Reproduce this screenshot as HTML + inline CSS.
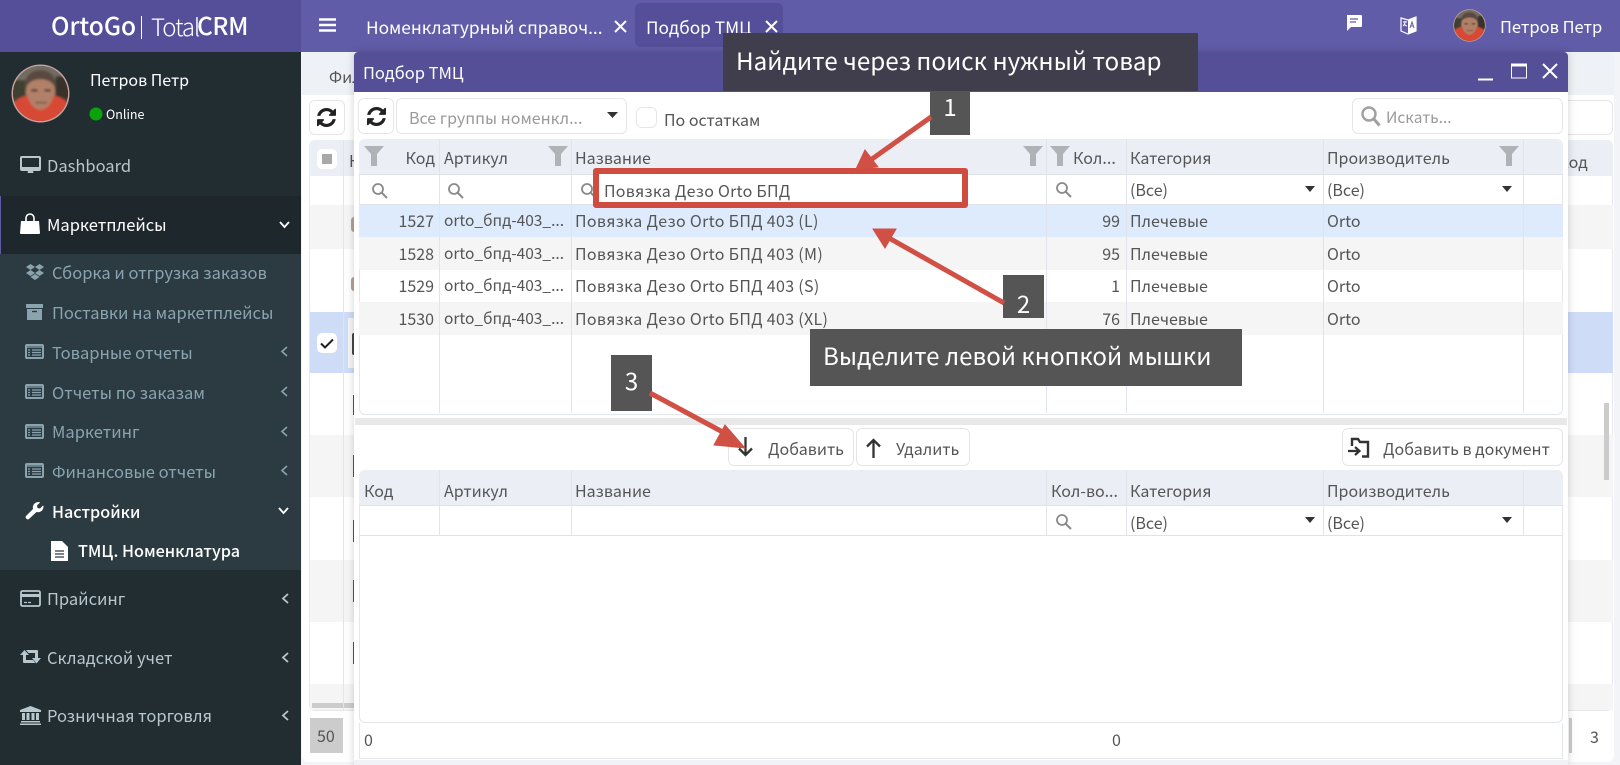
<!DOCTYPE html>
<html lang="ru"><head><meta charset="utf-8"><title>Подбор ТМЦ</title>
<style>
*{box-sizing:border-box}
html,body{margin:0;padding:0}
body{width:1620px;height:765px;overflow:hidden;position:relative;background:#ecf0f5;font-family:"Noto Sans CJK SC","Liberation Sans",sans-serif;color:#444}
.a{position:absolute}
.t{position:absolute;white-space:nowrap;line-height:20px;height:20px;font-size:16px}
.n{color:#8aa4af;font-size:16.5px}
.m{color:#b8c7ce;font-size:16.5px}
.w{color:#fff}
.g{color:#555;font-size:16px}
.o{font-size:15.5px}
.p{letter-spacing:.32px}
.r{text-align:right}
.v{position:absolute;width:1px;background:#e1e5ea}
.h{position:absolute;height:1px;background:#dfe3e8}
.b{position:absolute;background:#fff;border:1px solid #e6e6e6;border-radius:6px}
svg{position:absolute;overflow:visible}
</style></head><body>

<svg width="0" height="0" style="left:0;top:0">
<defs>
<filter id="bl" x="-10%" y="-10%" width="120%" height="120%"><feGaussianBlur stdDeviation="1"/></filter>
<clipPath id="cc"><circle cx="29" cy="29" r="27"/></clipPath>
<symbol id="av" viewBox="0 0 58 58">
<circle cx="29" cy="29" r="28.500" fill="#c9a09c"/>
<circle cx="29" cy="29" r="27" fill="#45433c"/>
<g clip-path="url(#cc)"><g filter="url(#bl)">
<rect x="0" y="0" width="58" height="16" fill="#6f6d64"/>
<rect x="0" y="16" width="14" height="18" fill="#3f3f30"/>
<rect x="44" y="12" width="14" height="22" fill="#38332c"/>
<ellipse cx="29" cy="28" rx="14.500" ry="18" fill="#b08068"/>
<path d="M14 25C12 12 20 6 29 6s17 6 15 19c-2-7-8-10-15-10s-13 3-15 10z" fill="#5a4a40"/>
<path d="M20 26h6M33 26h6" stroke="#4a3228" stroke-width="2"/>
<path d="M24 38h11" stroke="#7d4f3f" stroke-width="1.500"/>
<path d="M0 58V40c6-6 11-8 16-9 2 8 7 14 13 14s11-6 13-14c6 1 11 4 16 9v18z" fill="#d84a35"/>
</g></g>
</symbol>
<symbol id="ref" viewBox="0 0 1536 1536"><path d="M1511 928q0 5-1 7-64 268-268 434.500t-478 166.500q-146 0-282.500-55t-243.500-157l-129 129q-19 19-45 19t-45-19-19-45v-448q0-26 19-45t45-19h448q26 0 45 19t19 45-19 45l-137 137q71 66 161 102t187 36q134 0 250-65t186-179q11-17 53-117 8-23 30-23h192q13 0 22.500 9.500t9.500 22.500zm25-800v448q0 26-19 45t-45 19h-448q-26 0-45-19t-19-45 19-45l138-138q-148-137-349-137-134 0-250 65t-186 179q-11 17-53 117-8 23-30 23h-199q-13 0-22.500-9.500t-9.500-22.500v-7q65-268 270-434.500t480-166.500q146 0 284 55.500t245 156.500l130-129q19-19 45-19t45 19 19 45z" fill="#222"/></symbol>
</defs></svg>

<!-- top bar -->
<div class="a" style="left:0;top:0;width:1620px;height:52px;background:#605ca8"></div>
<div class="a" style="left:0;top:0;width:301px;height:52px;background:#554f99"></div>
<div class="t w" style="left:51px;top:14px;height:24px;line-height:24px;font-size:24.500px;font-weight:500">OrtoGo</div>
<div class="a" style="left:141px;top:16px;width:1px;height:23px;background:#fff"></div>
<div class="t w" style="left:151px;top:14px;height:24px;line-height:24px;font-size:24px;font-weight:300;letter-spacing:-1.100px">Total</div>
<div class="t w" style="left:197px;top:14px;height:24px;line-height:24px;font-size:24.500px;font-weight:500;letter-spacing:-.4px">CRM</div>
<svg style="left:319px;top:18px" width="18" height="14"><path d="M0 1.500h17M0 7h17M0 12.500h17" stroke="#fff" stroke-width="2.600"/></svg>
<div class="t w" style="left:366px;top:17px;font-size:17.300px">Номенклатурный справоч...</div>
<svg style="left:614px;top:20px" width="13" height="13"><path d="M1 1l11 11M12 1L1 12" stroke="#fff" stroke-width="2"/></svg>
<div class="a" style="left:635px;top:3px;width:148px;height:44px;background:#554f99;border-radius:6px"></div>
<div class="t w" style="left:646px;top:17px;font-size:17.300px">Подбор ТМЦ</div>
<svg style="left:765px;top:20px" width="13" height="13"><path d="M1 1l11 11M12 1L1 12" stroke="#fff" stroke-width="2"/></svg>
<svg style="left:1346px;top:15px" width="16" height="16"><path d="M1 0h14a1 1 0 011 1v10a1 1 0 01-1 1H5l-4 4z" fill="#fff"/><path d="M4 4h8M4 7h6" stroke="#605ca8" stroke-width="1.200"/></svg>
<svg style="left:1400px;top:15px" width="17" height="20"><path d="M1 3l7 2 8-3v14l-8 3-7-3z" fill="none" stroke="#fff" stroke-width="1.200"/><path d="M8 5v14l8-3V2z" fill="#fff"/><path d="M10 13l2-6 2 6M11 11h2" stroke="#605ca8" stroke-width="1" fill="none"/><path d="M3 7h4M5 6v1c0 2-1 3-2 4M4 9c1 1 2 2 3 2" stroke="#fff" stroke-width="1" fill="none"/></svg>
<svg style="left:1453px;top:9px" width="33" height="33"><use href="#av"/></svg>
<div class="t w" style="left:1500px;top:16px;font-size:16.500px">Петров Петр</div>

<!-- sidebar -->
<div class="a" style="left:0;top:52px;width:301px;height:713px;background:#222d32"></div>
<div class="a" style="left:0;top:196px;width:301px;height:58px;background:#1e282c;border-left:1px solid #605ca8"></div>
<div class="a" style="left:0;top:254px;width:301px;height:316px;background:#2c3b41"></div>
<svg style="left:11px;top:64px" width="59" height="59"><use href="#av"/></svg>
<div class="t w" style="left:90px;top:69px;font-size:16px">Петров Петр</div>
<svg style="left:89px;top:107px" width="14" height="14"><circle cx="7" cy="7" r="6.500" fill="#0ba30b"/></svg>
<div class="t w" style="left:106px;top:104px;font-size:12.500px">Online</div>

<svg style="left:20px;top:156px" width="21" height="18"><path d="M2 0h17a2 2 0 012 2v11a2 2 0 01-2 2h-6l.5 2h-6l.5-2H2a2 2 0 01-2-2V2a2 2 0 012-2zm0 2v9h17V2z" fill="#b8c7ce"/></svg>
<div class="t m" style="left:47px;top:155px">Dashboard</div>
<svg style="left:20px;top:214px" width="20" height="20"><path d="M1 7h18l1 12a1 1 0 01-1 1H1a1 1 0 01-1-1z" fill="#fff"/><path d="M6 9V4a4 4 0 018 0v5" fill="none" stroke="#fff" stroke-width="1.600"/></svg>
<div class="t w" style="left:47px;top:214px;font-size:16.500px">Маркетплейсы</div>
<svg style="left:279px;top:221px" width="11" height="8"><path d="M1 1l4.500 5L10 1" fill="none" stroke="#fff" stroke-width="1.800"/></svg>

<svg style="left:26px;top:264px" width="18" height="16"><path d="M4.500 0L9 3 4.500 6 0 3zM13.500 0L18 3l-4.500 3L9 3zM4.500 6L9 9 4.500 12 0 9zM13.500 6L18 9l-4.500 3L9 9zM4.500 13L9 10l4.500 3L9 16z" fill="#8aa4af"/></svg>
<div class="t n" style="left:52px;top:262px">Сборка и отгрузка заказов</div>
<svg style="left:26px;top:304px" width="17" height="16"><path d="M0 0h17v4H0zM1 5h15v11H1z" fill="#8aa4af"/><path d="M6 7.500h5" stroke="#2c3b41" stroke-width="1.400"/></svg>
<div class="t n" style="left:52px;top:302px">Поставки на маркетплейсы</div>
<svg style="left:25px;top:344px" width="19" height="15"><rect x="1" y="1" width="17" height="13" rx="1" fill="none" stroke="#8aa4af" stroke-width="2"/><path d="M1 3h17M3 6h2M7 6h9M3 8.500h2M7 8.500h9M3 11h2M7 11h9" stroke="#8aa4af" stroke-width="1.300"/></svg>
<div class="t n" style="left:52px;top:342px">Товарные отчеты</div>
<svg style="left:25px;top:384px" width="19" height="15"><rect x="1" y="1" width="17" height="13" rx="1" fill="none" stroke="#8aa4af" stroke-width="2"/><path d="M1 3h17M3 6h2M7 6h9M3 8.500h2M7 8.500h9M3 11h2M7 11h9" stroke="#8aa4af" stroke-width="1.300"/></svg>
<div class="t n" style="left:52px;top:382px">Отчеты по заказам</div>
<svg style="left:25px;top:424px" width="19" height="15"><rect x="1" y="1" width="17" height="13" rx="1" fill="none" stroke="#8aa4af" stroke-width="2"/><path d="M1 3h17M3 6h2M7 6h9M3 8.500h2M7 8.500h9M3 11h2M7 11h9" stroke="#8aa4af" stroke-width="1.300"/></svg>
<div class="t n" style="left:52px;top:421px">Маркетинг</div>
<svg style="left:25px;top:463px" width="19" height="15"><rect x="1" y="1" width="17" height="13" rx="1" fill="none" stroke="#8aa4af" stroke-width="2"/><path d="M1 3h17M3 6h2M7 6h9M3 8.500h2M7 8.500h9M3 11h2M7 11h9" stroke="#8aa4af" stroke-width="1.300"/></svg>
<div class="t n" style="left:52px;top:461px">Финансовые отчеты</div>
<svg style="left:281px;top:346px" width="7" height="11"><path d="M6 1L1 5.500 6 10" fill="none" stroke="#8aa4af" stroke-width="1.600"/></svg>
<svg style="left:281px;top:386px" width="7" height="11"><path d="M6 1L1 5.500 6 10" fill="none" stroke="#8aa4af" stroke-width="1.600"/></svg>
<svg style="left:281px;top:426px" width="7" height="11"><path d="M6 1L1 5.500 6 10" fill="none" stroke="#8aa4af" stroke-width="1.600"/></svg>
<svg style="left:281px;top:465px" width="7" height="11"><path d="M6 1L1 5.500 6 10" fill="none" stroke="#8aa4af" stroke-width="1.600"/></svg>
<svg style="left:25px;top:502px" width="18" height="18"><path d="M1 14L8 7C7 3 10 0 14 0c1 0 1 .5 .5 1L12 3.500l.5 2.500 2.500.5L17.500 4c.5-.5 1-.5 1 .5 0 4-3.500 6.500-7 5.500L4 17c-1.500 1.500-4.500-1.500-3-3z" fill="#fff"/></svg>
<div class="t w" style="left:52px;top:501px;font-size:16.200px;font-weight:500">Настройки</div>
<svg style="left:278px;top:507px" width="11" height="8"><path d="M1 1l4.500 5L10 1" fill="none" stroke="#fff" stroke-width="1.800"/></svg>
<svg style="left:51px;top:541px" width="17" height="20"><path d="M0 0h11l6 6v14H0z" fill="#fff"/><path d="M4 10h9M4 13h9M4 16h9" stroke="#2c3b41" stroke-width="1.200"/></svg>
<div class="t w" style="left:78px;top:540px;font-size:16.200px;font-weight:500">ТМЦ. Номенклатура</div>

<svg style="left:20px;top:590px" width="21" height="17"><rect x="1" y="1" width="19" height="15" rx="1.500" fill="none" stroke="#b8c7ce" stroke-width="1.800"/><path d="M1 5.500h19" stroke="#b8c7ce" stroke-width="3"/><path d="M4 12.500h3M8 12.500h3" stroke="#b8c7ce" stroke-width="1.200"/></svg>
<div class="t m" style="left:47px;top:588px">Прайсинг</div>
<svg style="left:20px;top:650px" width="21" height="15"><path d="M4.500 0L9 5H6v5h7l2.500 3H4a1 1 0 01-1-1V5H0zM6 0h11a1 1 0 011 1v7h3l-4.500 5.500L12 8h3V3H8.500z" fill="#b8c7ce"/></svg>
<div class="t m" style="left:47px;top:647px">Складской учет</div>
<svg style="left:20px;top:706px" width="21" height="19"><path d="M10.500 0L21 4v2H0V4zM2 7h3v7H2zM6.500 7h3v7h-3zM11.500 7h3v7h-3zM16 7h3v7h-3zM1 15h19v1.500H1zM0 17.500h21V19H0z" fill="#b8c7ce"/></svg>
<div class="t m" style="left:47px;top:705px">Розничная торговля</div>
<svg style="left:282px;top:593px" width="7" height="11"><path d="M6 1L1 5.500 6 10" fill="none" stroke="#b8c7ce" stroke-width="1.800"/></svg>
<svg style="left:282px;top:652px" width="7" height="11"><path d="M6 1L1 5.500 6 10" fill="none" stroke="#b8c7ce" stroke-width="1.800"/></svg>
<svg style="left:282px;top:710px" width="7" height="11"><path d="M6 1L1 5.500 6 10" fill="none" stroke="#b8c7ce" stroke-width="1.800"/></svg>

<!-- underlying page -->
<div class="a" style="left:301px;top:52px;width:1319px;height:713px;background:#f2f4f7"></div>
<div class="a" style="left:302px;top:52px;width:1312px;height:710px;background:#fff;border-radius:6px"></div>
<div class="a" style="left:302px;top:52px;width:1312px;height:43px;background:#eef1f5;border-radius:6px 6px 0 0"></div>
<div class="t g" style="left:329px;top:66px">Фил</div>
<div class="b" style="left:309px;top:100px;width:36px;height:35px"></div>
<svg style="left:317px;top:108px" width="19" height="19"><use href="#ref"/></svg>
<div class="b" style="left:1400px;top:100px;width:213px;height:35px"></div>
<div class="a" style="left:309px;top:140px;width:1304px;height:571px;background:#fff;border:1px solid #e6e8ec;border-radius:6px"></div>
<div class="a" style="left:309px;top:140px;width:1304px;height:36px;background:#ebeff5;border-radius:6px 6px 0 0"></div>
<div class="a" style="left:310px;top:205px;width:1303px;height:44px;background:#f5f5f5"></div>
<div class="a" style="left:310px;top:312px;width:1303px;height:61px;background:#cfdcf8"></div>
<div class="a" style="left:310px;top:435px;width:1303px;height:62px;background:#f5f5f5"></div>
<div class="a" style="left:310px;top:560px;width:1303px;height:62px;background:#f5f5f5"></div>
<div class="a" style="left:310px;top:684px;width:1303px;height:26px;background:#f5f5f5"></div>
<div class="a" style="left:312px;top:703px;width:60px;height:5px;background:#ccc"></div>
<div class="v" style="left:343px;top:140px;height:571px"></div>
<div class="a" style="left:348px;top:318px;width:6px;height:50px;background:#f4f4f4"></div>
<div class="a" style="left:352px;top:333px;width:2px;height:22px;background:#444;border-radius:2px 0 0 2px"></div>
<div class="a" style="left:351px;top:217px;width:3px;height:15px;background:#b8a193;border-radius:3px 0 0 3px"></div>
<div class="a" style="left:351px;top:277px;width:3px;height:14px;background:#b8a193;border-radius:3px 0 0 3px"></div>
<div class="a" style="left:353px;top:395px;width:1px;height:20px;background:#555"></div>
<div class="a" style="left:353px;top:455px;width:1px;height:22px;background:#555"></div>
<div class="a" style="left:353px;top:520px;width:1px;height:22px;background:#555"></div>
<div class="a" style="left:353px;top:580px;width:1px;height:22px;background:#555"></div>
<div class="a" style="left:353px;top:642px;width:1px;height:22px;background:#555"></div>
<div class="a" style="left:317px;top:149px;width:20px;height:20px;background:#fff;border-radius:5px"></div>
<div class="a" style="left:322px;top:154px;width:10px;height:10px;background:#a8a8a8"></div>
<div class="a" style="left:317px;top:333px;width:20px;height:20px;background:#fff;border-radius:5px"></div>
<svg style="left:320px;top:338px" width="14" height="11"><path d="M1 5.500l4 4 8-8" fill="none" stroke="#222" stroke-width="2"/></svg>
<div class="t g" style="left:349px;top:150px">Н</div>
<div class="t g" style="left:1560px;top:151px">код</div>
<div class="a" style="left:310px;top:718px;width:33px;height:35px;background:#ccc"></div>
<div class="t g" style="left:317px;top:725px">50</div>
<div class="a" style="left:1569px;top:718px;width:3px;height:35px;background:#ccc"></div>
<div class="t g" style="left:1590px;top:726px">3</div>
<div class="a" style="left:1604px;top:403px;width:5px;height:77px;background:#ccc"></div>

<!-- modal -->
<div class="a" style="left:354px;top:52px;width:1214px;height:713px;background:#fff;box-shadow:0 0 8px rgba(0,0,0,.18)"></div>
<div class="a" style="left:354px;top:52px;width:1214px;height:40px;background:#544f96;border-radius:4px 4px 0 0"></div>
<div class="t w" style="left:363px;top:62px;font-size:16.500px">Подбор ТМЦ</div>
<svg style="left:1478px;top:62px" width="16" height="20"><path d="M0 17.500h15" stroke="#fff" stroke-width="2"/></svg>
<svg style="left:1511px;top:63px" width="16" height="16"><path d="M.5 1h15v14H.5z" fill="none" stroke="#fff"/><path d="M0 2h16" stroke="#fff" stroke-width="3"/></svg>
<svg style="left:1542px;top:63px" width="16" height="16"><path d="M1 1l14 14M15 1L1 15" stroke="#fff" stroke-width="2"/></svg>

<div class="b" style="left:358px;top:98px;width:36px;height:36px"></div>
<svg style="left:367px;top:107px" width="19" height="19"><use href="#ref"/></svg>
<div class="b" style="left:396px;top:98px;width:231px;height:36px"></div>
<div class="t" style="left:409px;top:107px;color:#9a9a9a;font-size:16px">Все группы номенкл...</div>
<svg style="left:607px;top:112px" width="11" height="7"><path d="M0 0h11L5.500 6z" fill="#333"/></svg>
<div class="b" style="left:636px;top:107px;width:21px;height:21px"></div>
<div class="t g" style="left:664px;top:109px">По остаткам</div>
<div class="b" style="left:1352px;top:98px;width:211px;height:36px"></div>
<svg style="left:1361px;top:106px" width="20" height="21"><circle cx="8" cy="8" r="6.500" fill="none" stroke="#a0a0a0" stroke-width="2.400"/><path d="M12.500 12.500l6 7" stroke="#a0a0a0" stroke-width="3"/></svg>
<div class="t" style="left:1386px;top:107px;color:#9a9a9a;font-size:15.500px">Искать...</div>

<!-- grid 1 -->
<div class="a" style="left:359px;top:139px;width:1204px;height:276px;border:1px solid #e3e6ea;border-radius:6px"></div>
<div class="a" style="left:359px;top:139px;width:1204px;height:36px;background:#ebeff5;border-radius:6px 6px 0 0;border-bottom:1px solid #dfe3e8"></div>
<div class="a" style="left:359px;top:204px;width:1204px;height:33px;background:#deebfd"></div>
<div class="a" style="left:359px;top:237px;width:1204px;height:33px;background:#f5f5f5"></div>
<div class="a" style="left:359px;top:302px;width:1204px;height:33px;background:#f5f5f5"></div>
<div class="h" style="left:359px;top:204px;width:1204px"></div>
<div class="v" style="left:439px;top:139px;height:274px"></div>
<div class="v" style="left:571px;top:139px;height:274px"></div>
<div class="v" style="left:1046px;top:139px;height:274px"></div>
<div class="v" style="left:1126px;top:139px;height:274px"></div>
<div class="v" style="left:1323px;top:139px;height:274px"></div>
<div class="v" style="left:1523px;top:139px;height:274px"></div>

<svg style="left:364px;top:146px" width="20" height="20"><path d="M0 0h20l-7 8v12H7V8z" fill="#b0b3b6"/></svg>
<svg style="left:548px;top:146px" width="20" height="20"><path d="M0 0h20l-7 8v12H7V8z" fill="#b0b3b6"/></svg>
<svg style="left:1023px;top:146px" width="20" height="20"><path d="M0 0h20l-7 8v12H7V8z" fill="#b0b3b6"/></svg>
<svg style="left:1050px;top:146px" width="20" height="20"><path d="M0 0h20l-7 8v12H7V8z" fill="#b0b3b6"/></svg>
<svg style="left:1499px;top:146px" width="20" height="20"><path d="M0 0h20l-7 8v12H7V8z" fill="#b0b3b6"/></svg>

<div class="t g r" style="left:385px;top:147px;width:50px">Код</div>
<div class="t g" style="left:444px;top:147px">Артикул</div>
<div class="t g" style="left:575px;top:147px">Название</div>
<div class="t g" style="left:1073px;top:147px">Кол...</div>
<div class="t g" style="left:1130px;top:147px">Категория</div>
<div class="t g" style="left:1327px;top:147px">Производитель</div>

<svg style="left:372px;top:183px" width="16" height="16"><circle cx="6" cy="6" r="5" fill="none" stroke="#8a8a8a" stroke-width="1.800"/><path d="M9.500 9.500l5.500 5.500" stroke="#8a8a8a" stroke-width="2"/></svg>
<svg style="left:448px;top:183px" width="16" height="16"><circle cx="6" cy="6" r="5" fill="none" stroke="#8a8a8a" stroke-width="1.800"/><path d="M9.500 9.500l5.500 5.500" stroke="#8a8a8a" stroke-width="2"/></svg>
<svg style="left:581px;top:183px" width="16" height="16"><circle cx="6" cy="6" r="5" fill="none" stroke="#8a8a8a" stroke-width="1.800"/><path d="M9.500 9.500l5.500 5.500" stroke="#8a8a8a" stroke-width="2"/></svg>
<svg style="left:1056px;top:182px" width="16" height="16"><circle cx="6" cy="6" r="5" fill="none" stroke="#8a8a8a" stroke-width="1.800"/><path d="M9.500 9.500l5.500 5.500" stroke="#8a8a8a" stroke-width="2"/></svg>
<div class="t g" style="left:1130px;top:179px">(Все)</div>
<div class="t g" style="left:1327px;top:179px">(Все)</div>
<svg style="left:1305px;top:186px" width="10" height="6"><path d="M0 0h10L5 6z" fill="#333"/></svg>
<svg style="left:1502px;top:186px" width="10" height="6"><path d="M0 0h10L5 6z" fill="#333"/></svg>

<div class="t g r" style="left:384px;top:210px;width:50px">1527</div>
<div class="t g o" style="left:444px;top:210px">orto_бпд-403_...</div>
<div class="t g p" style="left:575px;top:210px">Повязка Дезо Orto БПД 403 (L)</div>
<div class="t g r" style="left:1070px;top:210px;width:50px">99</div>
<div class="t g" style="left:1130px;top:210px">Плечевые</div>
<div class="t g" style="left:1327px;top:210px">Orto</div>

<div class="t g r" style="left:384px;top:243px;width:50px">1528</div>
<div class="t g o" style="left:444px;top:243px">orto_бпд-403_...</div>
<div class="t g p" style="left:575px;top:243px">Повязка Дезо Orto БПД 403 (M)</div>
<div class="t g r" style="left:1070px;top:243px;width:50px">95</div>
<div class="t g" style="left:1130px;top:243px">Плечевые</div>
<div class="t g" style="left:1327px;top:243px">Orto</div>

<div class="t g r" style="left:384px;top:275px;width:50px">1529</div>
<div class="t g o" style="left:444px;top:275px">orto_бпд-403_...</div>
<div class="t g p" style="left:575px;top:275px">Повязка Дезо Orto БПД 403 (S)</div>
<div class="t g r" style="left:1070px;top:275px;width:50px">1</div>
<div class="t g" style="left:1130px;top:275px">Плечевые</div>
<div class="t g" style="left:1327px;top:275px">Orto</div>

<div class="t g r" style="left:384px;top:308px;width:50px">1530</div>
<div class="t g o" style="left:444px;top:308px">orto_бпд-403_...</div>
<div class="t g p" style="left:575px;top:308px">Повязка Дезо Orto БПД 403 (XL)</div>
<div class="t g r" style="left:1070px;top:308px;width:50px">76</div>
<div class="t g" style="left:1130px;top:308px">Плечевые</div>
<div class="t g" style="left:1327px;top:308px">Orto</div>

<!-- splitter -->
<div class="a" style="left:355px;top:418px;width:1212px;height:7px;background:#e8e8e8"></div>

<!-- buttons -->
<div class="b" style="left:728px;top:428px;width:126px;height:38px"></div>
<svg style="left:738px;top:437px" width="15" height="20"><path d="M7.500 0v18M1 11.500l6.500 6.500 6.500-6.500" fill="none" stroke="#333" stroke-width="2.300"/></svg>
<div class="t g" style="left:768px;top:438px">Добавить</div>
<div class="b" style="left:856px;top:428px;width:114px;height:38px"></div>
<svg style="left:866px;top:438px" width="15" height="20"><path d="M7.500 20V2M1 8.500L7.500 2 14 8.500" fill="none" stroke="#333" stroke-width="2.300"/></svg>
<div class="t g" style="left:896px;top:438px">Удалить</div>
<div class="b" style="left:1342px;top:428px;width:221px;height:38px"></div>
<svg style="left:1348px;top:438px" width="22" height="20"><path d="M4 8V1h6l2 3h8v14.500h-6" fill="none" stroke="#333" stroke-width="2.400"/><path d="M0 13h10M7 9l4.500 4L7 17" fill="none" stroke="#333" stroke-width="2.200"/></svg>
<div class="t g" style="left:1383px;top:438px">Добавить в документ</div>

<!-- grid 2 -->
<div class="a" style="left:359px;top:470px;width:1204px;height:253px;border:1px solid #e3e6ea;border-radius:6px"></div>
<div class="a" style="left:359px;top:470px;width:1204px;height:36px;background:#ebeff5;border-radius:6px 6px 0 0;border-bottom:1px solid #dfe3e8"></div>
<div class="h" style="left:359px;top:535px;width:1204px"></div>
<div class="v" style="left:439px;top:470px;height:65px"></div>
<div class="v" style="left:571px;top:470px;height:65px"></div>
<div class="v" style="left:1046px;top:470px;height:65px"></div>
<div class="v" style="left:1126px;top:470px;height:65px"></div>
<div class="v" style="left:1323px;top:470px;height:65px"></div>
<div class="v" style="left:1523px;top:470px;height:65px"></div>
<div class="t g" style="left:364px;top:480px">Код</div>
<div class="t g" style="left:444px;top:480px">Артикул</div>
<div class="t g" style="left:575px;top:480px">Название</div>
<div class="t g" style="left:1051px;top:480px">Кол-во...</div>
<div class="t g" style="left:1130px;top:480px">Категория</div>
<div class="t g" style="left:1327px;top:480px">Производитель</div>
<svg style="left:1056px;top:514px" width="16" height="16"><circle cx="6" cy="6" r="5" fill="none" stroke="#8a8a8a" stroke-width="1.800"/><path d="M9.500 9.500l5.500 5.500" stroke="#8a8a8a" stroke-width="2"/></svg>
<div class="t g" style="left:1130px;top:512px">(Все)</div>
<div class="t g" style="left:1327px;top:512px">(Все)</div>
<svg style="left:1305px;top:517px" width="10" height="6"><path d="M0 0h10L5 6z" fill="#333"/></svg>
<svg style="left:1502px;top:517px" width="10" height="6"><path d="M0 0h10L5 6z" fill="#333"/></svg>

<!-- footer -->
<div class="a" style="left:359px;top:723px;width:1204px;height:36px;border:1px solid #e3e6ea;border-top:0"></div>
<div class="t g" style="left:364px;top:729px">0</div>
<div class="t g" style="left:1112px;top:729px">0</div>
<div class="a" style="left:354px;top:760px;width:1214px;height:5px;background:#f0f2f5"></div>

<!-- annotations -->
<div class="a" style="left:723px;top:33px;width:475px;height:58px;background:#403e4d"></div>
<div class="t w" style="left:736px;top:45px;height:30px;line-height:30px;font-size:24.200px">Найдите через поиск нужный товар</div>
<div class="a" style="left:593px;top:168px;width:375px;height:40px;background:#fff;border:6px solid #d04b40;border-radius:3px"></div>
<div class="t g" style="left:604px;top:180px;letter-spacing:.25px">Повязка Дезо Orto БПД</div>
<div class="a" style="left:930px;top:92px;width:40px;height:43px;background:#555"></div>
<div class="t w" style="left:930px;top:91px;width:40px;height:30px;line-height:30px;text-align:center;font-size:24px">1</div>
<div class="a" style="left:1003px;top:275px;width:41px;height:43px;background:#555"></div>
<div class="t w" style="left:1003px;top:288px;width:41px;height:30px;line-height:30px;text-align:center;font-size:24px">2</div>
<div class="a" style="left:810px;top:329px;width:432px;height:57px;background:#555"></div>
<div class="t w" style="left:823px;top:340px;height:30px;line-height:30px;font-size:24.100px">Выделите левой кнопкой мышки</div>
<div class="a" style="left:611px;top:355px;width:41px;height:56px;background:#555"></div>
<div class="t w" style="left:611px;top:365px;width:41px;height:30px;line-height:30px;text-align:center;font-size:24px">3</div>
<svg style="left:0;top:0" width="1620" height="765">
<g fill="#d15045" stroke="#d15045">
<path d="M931 117L872 159" stroke-width="5"/><path d="M856 169L865 150 878 167z"/>
<path d="M1004 303L889 238" stroke-width="5"/><path d="M873 229L896 229 885 248z"/>
<path d="M650 393L732 437" stroke-width="5"/><path d="M745 448L714 445 725 425z"/>
</g></svg>
</body></html>
